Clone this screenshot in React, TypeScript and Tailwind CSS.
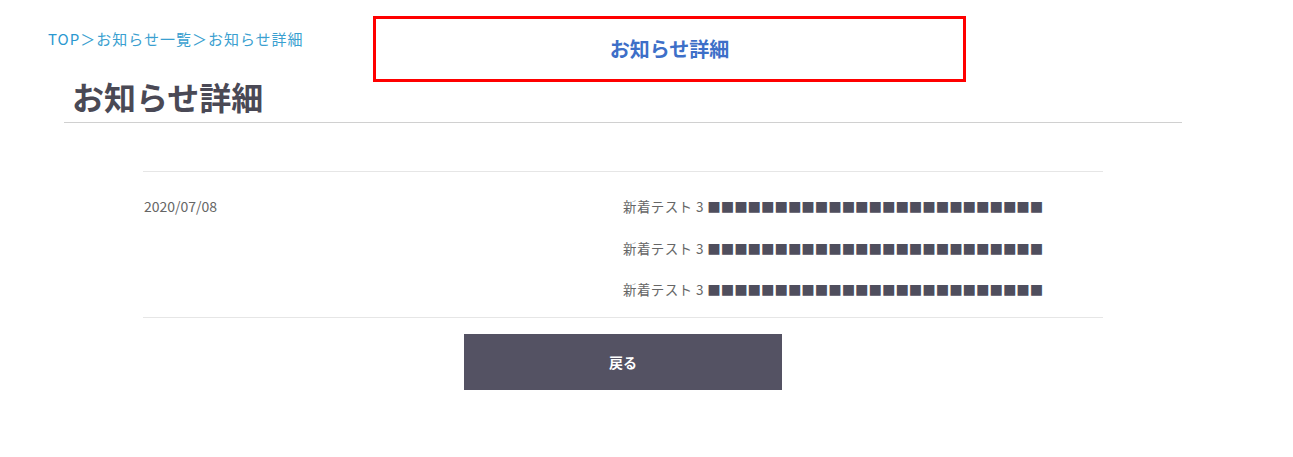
import React from "react";

const font = "font-['Noto_Sans_CJK_JP','Noto_Sans',sans-serif]";

export default function App() {
  const squares = "■".repeat(25);
  return (
    <div className={`relative w-[1293px] h-[457px] bg-white ${font}`}>
      <div className="pt-[29px] pl-[48px] text-[15px] leading-[20px] text-[#3a9fd0] tracking-[1px]">
        <span className="text-[#2a98d0]">TOP</span>
        <span>＞お知らせ一覧＞お知らせ詳細</span>
      </div>
      <div className="ml-[64px] w-[1118px]">
        <h1 className="mt-[27px] pl-[8px] pb-[6px] text-[32px] leading-[40px] font-bold text-[#4a4955] border-b border-[#d0d0d0]">
          お知らせ詳細
        </h1>
        <div className="mx-[79px] mt-[48px]">
          <div className="grid grid-cols-[480px_1fr] border-t border-b border-[#e6e6e6] pt-[24px] pb-[18px]">
            <div className="pl-[1px] text-[14px] leading-[20px] text-[#666]">2020/07/08</div>
            <div className="flex flex-col gap-[21.5px] text-[13.5px] leading-[20px] text-[#666] whitespace-nowrap">
              {[0, 1, 2].map((i) => (
                <p key={i}>
                  <span className="tracking-[0.4px]">新着テスト 3 </span>
                  <span className="text-[#4f4e5d] tracking-[-0.06px]">{squares}</span>
                </p>
              ))}
            </div>
          </div>
          <div className="mt-[16px] mx-auto w-[318px] h-[56px] bg-[#545263] flex items-center justify-center text-white text-[14px] font-bold">
            戻る
          </div>
        </div>
      </div>
      <div className="absolute left-[373px] top-[16px] w-[593px] h-[66px] border-[3px] border-[#ff0000] flex items-center justify-center text-[20px] font-bold text-[#3d6fc8]">
        お知らせ詳細
      </div>
    </div>
  );
}
